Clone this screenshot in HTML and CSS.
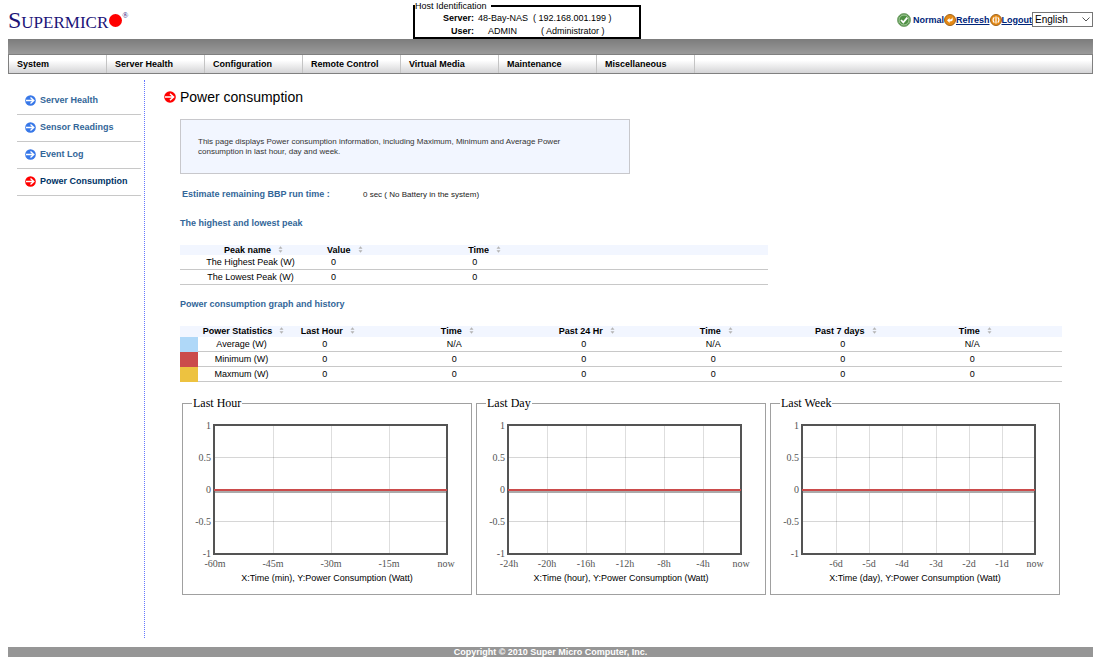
FILE: index.html
```html
<!DOCTYPE html>
<html lang="en">
<head>
<meta charset="utf-8">
<title>Power consumption</title>
<link rel="stylesheet" href="styles.css">
</head>
<body>
<svg class="defs" aria-hidden="true">
  <symbol id="arrow" viewBox="0 0 12 12"><circle cx="6" cy="6" r="5.8" fill="currentColor"/><path d="M1 6H9.5M6 2.8L9.6 6L6 9.2" fill="none" stroke="#fff" stroke-width="1.5"/></symbol>
  <symbol id="sort" viewBox="0 0 5 7"><path d="M0.5 2.8L2.5 0.3L4.5 2.8ZM0.5 4.2L2.5 6.7L4.5 4.2Z" fill="#b4b4b4"/></symbol>
  <symbol id="frame" viewBox="0 0 270 152"><path d="M23 53.5H256M23 117.5H256" stroke="#000" stroke-opacity=".16"/><rect x="22" y="21" width="233" height="129" fill="none" stroke="#545454" stroke-width="2"/></symbol>
</svg>

<header class="header">
  <div class="logo">Supermicr<span class="logo-dot"></span><span class="logo-reg">®</span></div>
  <fieldset class="host">
    <legend>Host Identification</legend>
    <dl>
      <dt>Server:</dt><dd>48-Bay-NAS</dd><dd>( 192.168.001.199 )</dd>
      <dt>User:</dt><dd class="host-user">ADMIN</dd><dd class="host-role">( Administrator )</dd>
    </dl>
  </fieldset>
  <div class="tools">
    <svg class="status" viewBox="0 0 14 14"><circle cx="7" cy="7" r="6.5" fill="#4d8f42" stroke="#80a878"/><circle cx="7" cy="7" r="5" fill="none" stroke="#a9cda0"/><path d="M4 7L6.3 9.4L10.3 4.7" fill="none" stroke="#fff" stroke-width="1.8"/></svg>
    <span class="normal">Normal</span>
    <svg class="tool-icon" viewBox="0 0 12 12"><circle cx="6" cy="6" r="5.5" fill="#e68a14" stroke="#a0641c"/><path d="M3 6.3L5.6 4V5.4Q8 5.6 8.2 3.2Q10.2 7.5 5.6 7.6V9Z" fill="#fff"/></svg>
    <a href="#">Refresh</a>
    <svg class="tool-icon" viewBox="0 0 12 12"><circle cx="6" cy="6" r="5.5" fill="#e68a14" stroke="#a0641c"/><path d="M6 2.5V9.5M4.3 3.4Q1.8 6 4.3 8.6M7.7 3.4Q10.2 6 7.7 8.6" fill="none" stroke="#fff" stroke-width="1.2"/></svg>
    <a href="#">Logout</a>
    <span class="lang"><select aria-label="Language"><option>English</option></select><svg viewBox="0 0 8 5"><path d="M0.5 0.5L4 4L7.5 0.5" fill="none" stroke="#555"/></svg></span>
  </div>
</header>

<div class="band"></div>
<nav class="menu">
  <a href="#">System</a><a href="#">Server Health</a><a href="#">Configuration</a><a href="#">Remote Control</a><a href="#">Virtual Media</a><a href="#">Maintenance</a><a href="#">Miscellaneous</a>
</nav>

<div class="body">
  <nav class="side">
    <a href="#"><svg><use href="#arrow"/></svg>Server Health</a>
    <a href="#"><svg><use href="#arrow"/></svg>Sensor Readings</a>
    <a href="#"><svg><use href="#arrow"/></svg>Event Log</a>
    <a href="#" class="current"><svg><use href="#arrow"/></svg>Power Consumption</a>
  </nav>
  <main class="main">
    <h1><svg><use href="#arrow"/></svg>Power consumption</h1>
    <div class="content">
      <p class="info">This page displays Power consumption information, including Maximum, Minimum and Average Power consumption in last hour, day and week.</p>
      <div class="runtime"><strong>Estimate remaining BBP run time :</strong><span>0 sec ( No Battery in the system)</span></div>
      <h2>The highest and lowest peak</h2>
      <table class="peak">
        <thead><tr><th>Peak name<svg><use href="#sort"/></svg></th><th>Value<svg><use href="#sort"/></svg></th><th>Time<svg><use href="#sort"/></svg></th></tr></thead>
        <tbody>
          <tr><td>The Highest Peak (W)</td><td>0</td><td>0</td></tr>
          <tr><td>The Lowest Peak (W)</td><td>0</td><td>0</td></tr>
        </tbody>
      </table>
      <h2>Power consumption graph and history</h2>
      <table class="stats">
        <thead><tr><th class="key"></th><th class="name">Power Statistics<svg><use href="#sort"/></svg></th><th>Last Hour<svg><use href="#sort"/></svg></th><th>Time<svg><use href="#sort"/></svg></th><th>Past 24 Hr<svg><use href="#sort"/></svg></th><th>Time<svg><use href="#sort"/></svg></th><th>Past 7 days<svg><use href="#sort"/></svg></th><th>Time<svg><use href="#sort"/></svg></th></tr></thead>
        <tbody>
          <tr><td class="key average"></td><td class="name">Average (W)</td><td>0</td><td>N/A</td><td>0</td><td>N/A</td><td>0</td><td>N/A</td></tr>
          <tr><td class="key minimum"></td><td class="name">Minimum (W)</td><td>0</td><td>0</td><td>0</td><td>0</td><td>0</td><td>0</td></tr>
          <tr><td class="key maximum"></td><td class="name">Maxmum (W)</td><td>0</td><td>0</td><td>0</td><td>0</td><td>0</td><td>0</td></tr>
        </tbody>
      </table>
      <div class="charts">
        <fieldset>
          <legend>Last Hour</legend>
          <svg viewBox="0 6 270 162">
            <path class="grid" d="M81.5 21V150M139.5 21V150M197.5 21V150"/>
            <use href="#frame" width="270" height="152"/>
            <path class="shadow" d="M23 87.5H254"/><path class="line" d="M22 86H255"/>
            <g class="ylab"><text x="19" y="25">1</text><text x="19" y="57">0.5</text><text x="19" y="89">0</text><text x="19" y="121">-0.5</text><text x="19" y="153">-1</text></g>
            <g class="xlab"><text x="23" y="163">-60m</text><text x="81" y="163">-45m</text><text x="139" y="163">-30m</text><text x="197" y="163">-15m</text><text x="254" y="163">now</text></g>
          </svg>
          <p>X:Time (min), Y:Power Consumption (Watt)</p>
        </fieldset>
        <fieldset>
          <legend>Last Day</legend>
          <svg viewBox="0 6 270 162">
            <path class="grid" d="M61.5 21V150M100.5 21V150M139.5 21V150M178.5 21V150M217.5 21V150"/>
            <use href="#frame" width="270" height="152"/>
            <path class="shadow" d="M23 87.5H254"/><path class="line" d="M22 86H255"/>
            <g class="ylab"><text x="19" y="25">1</text><text x="19" y="57">0.5</text><text x="19" y="89">0</text><text x="19" y="121">-0.5</text><text x="19" y="153">-1</text></g>
            <g class="xlab"><text x="23" y="163">-24h</text><text x="61" y="163">-20h</text><text x="100" y="163">-16h</text><text x="139" y="163">-12h</text><text x="178" y="163">-8h</text><text x="217" y="163">-4h</text><text x="255" y="163">now</text></g>
          </svg>
          <p>X:Time (hour), Y:Power Consumption (Watt)</p>
        </fieldset>
        <fieldset>
          <legend>Last Week</legend>
          <svg viewBox="0 6 270 162">
            <path class="grid" d="M56.5 21V150M89.5 21V150M122.5 21V150M156.5 21V150M189.5 21V150M222.5 21V150"/>
            <use href="#frame" width="270" height="152"/>
            <path class="shadow" d="M23 87.5H254"/><path class="line" d="M22 86H255"/>
            <g class="ylab"><text x="19" y="25">1</text><text x="19" y="57">0.5</text><text x="19" y="89">0</text><text x="19" y="121">-0.5</text><text x="19" y="153">-1</text></g>
            <g class="xlab"><text x="56" y="163">-6d</text><text x="89" y="163">-5d</text><text x="122" y="163">-4d</text><text x="156" y="163">-3d</text><text x="189" y="163">-2d</text><text x="222" y="163">-1d</text><text x="255" y="163">now</text></g>
          </svg>
          <p>X:Time (day), Y:Power Consumption (Watt)</p>
        </fieldset>
      </div>
    </div>
  </main>
</div>
<footer class="footer">Copyright © 2010 Super Micro Computer, Inc.</footer>
</body>
</html>
```
FILE: styles.css
```css
* { box-sizing: border-box; }
body {
  margin: 0 19px 0 8px;
  min-height: 100vh;
  display: flex;
  flex-direction: column;
  background: #fff;
  color: #000;
  font: 9px/12px "Liberation Sans", Arial, sans-serif;
}
h1, h2, p, dl, dd, fieldset { margin: 0; }
a { color: inherit; text-decoration: none; }
.defs { position: absolute; width: 0; height: 0; }

.header {
  height: 39px;
  display: grid;
  grid-template-columns: 405fr 228px 452fr;
  align-items: start;
}
.logo {
  display: flex;
  align-items: center;
  padding-top: 8px;
  color: #1c1478;
  font: small-caps 24px/24px "Liberation Serif", "Times New Roman", serif;
}
.logo-dot { width: 13px; height: 13px; margin-left: 1px; border-radius: 50%; background: #f00; }
.logo-reg { font-size: 8px; line-height: 16px; align-self: flex-start; }

.host { height: 39px; padding: 0; border: 2px solid #000; }
.host legend { padding: 0 4px 0 0; line-height: 12px; }
.host dl { display: grid; grid-template-columns: 59px 51px 1fr; column-gap: 4px; line-height: 13px; }
.host dt { text-align: right; font-weight: bold; }
.host-user { padding-left: 10px; }
.host-role { padding-left: 8px; }

.tools {
  display: flex;
  justify-content: flex-end;
  align-items: center;
  padding-top: 12px;
  color: #00257a;
  font-weight: bold;
}
.tools a { text-decoration: underline; }
.status { width: 14px; height: 14px; margin-right: 2px; }
.tool-icon { width: 12px; height: 12px; }
.lang { position: relative; width: 61px; height: 15px; }
.lang select {
  appearance: none;
  width: 100%;
  height: 100%;
  padding: 0 2px;
  border: 1px solid #767676;
  border-radius: 0;
  background: #fff;
  color: #000;
  font: 10px/12px "Liberation Sans", Arial, sans-serif;
}
.lang svg { position: absolute; right: 3px; top: 5px; width: 8px; height: 5px; pointer-events: none; }

.band { height: 15px; background: linear-gradient(#7c7c7c, #9a9a9a); }
.menu {
  display: flex;
  height: 20px;
  border: 1px solid #808080;
  background: linear-gradient(#fff 30%, #d4d4d6);
  font-weight: bold;
  line-height: 18px;
}
.menu a { width: 98px; padding-left: 8px; border-right: 1px solid #c4c4c4; }

.body { flex: 1; display: flex; padding: 6px 0 9px; }
.side {
  flex: 0 0 137px;
  padding: 8px 3px 0 9px;
  border-right: 1px dotted #6478ff;
  color: #336699;
  font-weight: bold;
}
.side a {
  display: flex;
  align-items: center;
  height: 27px;
  padding: 0 0 2px 8px;
  gap: 4px;
  border-bottom: 1px solid #c8c8c8;
}
.side svg { width: 11px; height: 11px; color: #3878e8; }
.side .current { color: #003366; }
.side .current svg { color: #f00; }

.main { flex: 1; min-width: 0; padding: 8px 31px 0 19px; }
h1 { display: flex; align-items: center; gap: 4px; font-size: 14px; font-weight: normal; line-height: 18px; }
h1 svg { width: 12px; height: 12px; color: #f00; }
.content { padding-left: 16px; }
.info {
  width: 450px;
  margin-top: 13px;
  padding: 17px 40px 16px 17px;
  border: 1px solid #c8c8cc;
  background: #f2f6ff;
  color: #333;
  font-size: 8px;
  line-height: 10px;
}
.runtime { display: grid; grid-template-columns: 181px 1fr; align-items: end; padding: 14px 0 0 2px; }
.runtime strong, h2 { color: #336699; font-size: 9px; line-height: 12px; }
.runtime span { color: #222; font-size: 8px; line-height: 10px; }
h2 { margin-top: 17px; }

table { border-collapse: separate; border-spacing: 0; table-layout: fixed; width: 100%; text-align: center; }
th, td { padding: 0; white-space: nowrap; }
td { height: 15px; line-height: 12px; border-bottom: 1px solid #c8c8c8; }
th { height: 10px; line-height: 10px; }
th svg { width: 5px; height: 7px; margin-left: 7px; }
thead { background: #f2f6ff; }
.peak { width: calc(100% * 2 / 3); margin-top: 16px; }
.peak th:first-child { width: 24%; padding-left: 6px; }
.peak th:nth-child(2) { width: 24%; }
.peak th + th { text-align: left; padding-left: 6px; }
.peak td + td { text-align: left; padding-left: 10px; }
.peak + h2 { margin-top: 13px; }

.stats { margin-top: 16px; }
.stats th { height: 11px; line-height: 11px; padding-right: 44px; }
.stats td { padding-right: 50px; }
.stats .key { width: 18px; padding: 0; border: 0; }
.stats .name { width: 87px; padding-right: 0; }
.stats th.name { padding-left: 4px; }
.average { background: #afd8f8; }
.minimum { background: #cb4b4b; }
.maximum { background: #edc240; }

.charts { display: grid; grid-template-columns: repeat(3, 1fr); gap: 4px; margin-top: 14px; padding: 0 2px; }
.charts fieldset { min-width: 0; padding: 0 9px 10px; border: 1px solid #a0a0a0; }
.charts legend { padding: 0 1px; font: 12px/14px "Liberation Serif", "Times New Roman", serif; }
.charts svg { display: block; width: 100%; }
.charts p { text-align: center; line-height: 12px; }
.grid { stroke: #000; stroke-opacity: .13; stroke-width: 1; }
.shadow { stroke: #aaa; stroke-width: 3; }
.line { stroke: #cb4b4b; stroke-width: 2; }
.charts text { fill: #545454; font: 10px "Liberation Serif", "Times New Roman", serif; }
.ylab { text-anchor: end; }
.xlab { text-anchor: middle; }

.footer { background: #969696; color: #fff; font-weight: bold; line-height: 10px; text-align: center; }
```
